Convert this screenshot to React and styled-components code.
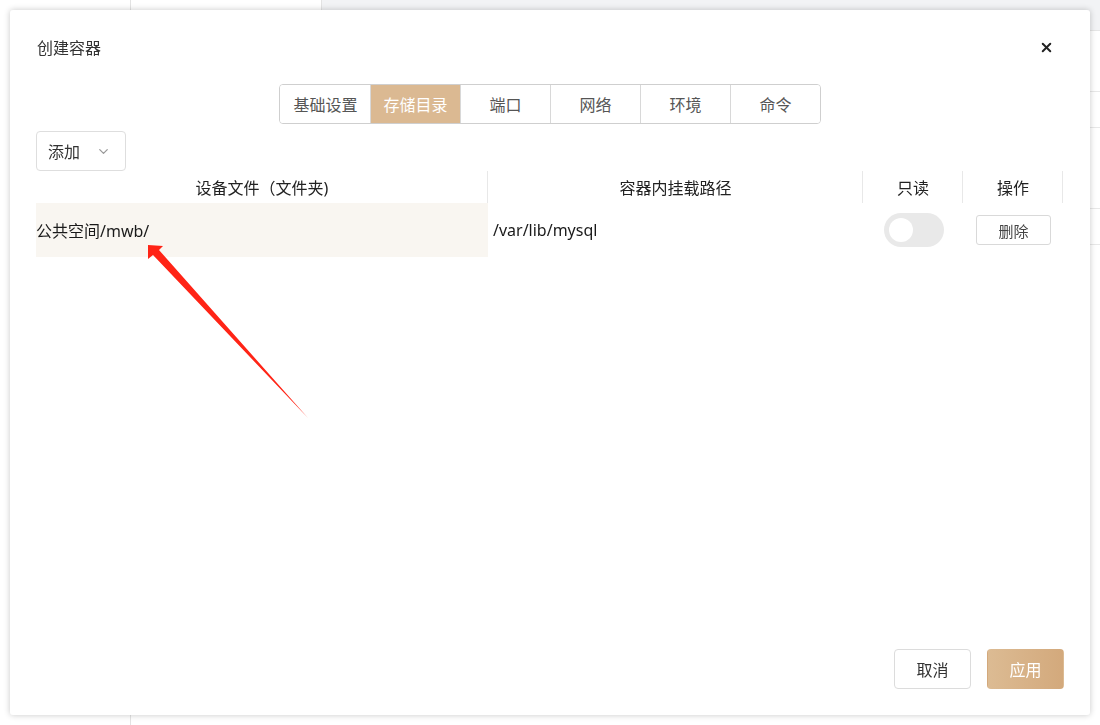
import React from 'react'
import styled, { createGlobalStyle } from 'styled-components'
import { ChevronDown, X } from 'lucide-react'

const Global = createGlobalStyle`
  html, body { margin: 0; padding: 0; }
  body {
    width: 1100px;
    height: 725px;
    overflow: hidden;
    font-family: "Noto Sans", "Noto Sans CJK SC", sans-serif;
    color: #222;
    background: #fff;
  }
`

const tabs = ['基础设置', '存储目录', '端口', '网络', '环境', '命令']

const Page = styled.div`
  display: flex;
  height: 725px;
`
const Side = styled.div`
  width: 130px;
  border-right: 1px solid #e3e3e3;
  background: #fff;
`
const Main = styled.div`
  flex: 1;
  display: flex;
  flex-direction: column;
`
const TopStrip = styled.div`
  height: 30px;
  background: #f2f3f5;
  border-bottom: 1px solid #e6e6e6;
  display: flex;
`
const TopCard = styled.div`
  width: 190px;
  background: #fff;
  border-right: 1px solid #e3e3e3;
`
const BgLine = styled.div`
  height: ${p => p.h}px;
  border-bottom: 1px solid #e8e8e8;
`

const Modal = styled.div`
  position: fixed;
  left: 10px;
  top: 10px;
  width: 1080px;
  height: 705px;
  box-sizing: border-box;
  background: #fff;
  border-radius: 3px;
  box-shadow: 0 0 6px rgba(0, 0, 0, 0.22);
  display: flex;
  flex-direction: column;
  padding: 0 26px 26px 26px;
`
const Header = styled.div`
  height: 74px;
  display: flex;
  align-items: center;
  justify-content: space-between;
`
const Title = styled.div`
  font-size: 16px;
  color: #333;
  padding-left: 1px;
`
const Close = styled.div`
  display: flex;
  margin-right: 10px;
  color: #222;
`
const TabRow = styled.div`
  display: flex;
  justify-content: center;
`
const TabGroup = styled.div`
  display: flex;
  border: 1px solid #cfcfcf;
  border-radius: 4px;
  overflow: hidden;
`
const Tab = styled.div`
  width: 89px;
  height: 38px;
  display: flex;
  align-items: center;
  justify-content: center;
  font-size: 16px;
  color: ${p => (p.active ? '#fff' : '#555')};
  background: ${p => (p.active ? '#dbb992' : '#fff')};
  border-left: 1px solid ${p => (p.first ? 'transparent' : '#d8d8d8')};
`
const Select = styled.div`
  margin-top: 7px;
  width: 90px;
  height: 40px;
  box-sizing: border-box;
  border: 1px solid #dedede;
  border-radius: 4px;
  display: flex;
  align-items: center;
  justify-content: space-between;
  padding: 0 14px 0 11px;
  font-size: 16px;
  color: #333;
`
const Table = styled.div`
  display: grid;
  grid-template-columns: 452px 375px 100px 100px;
`
const Th = styled.div`
  height: 32px;
  display: flex;
  align-items: center;
  justify-content: center;
  font-size: 16px;
  color: #222;
  position: relative;
  &::after {
    content: '';
    position: absolute;
    right: 0;
    top: 0;
    bottom: 0;
    border-right: 1px solid #e8e8e8;
  }
`
const Td = styled.div`
  height: 54px;
  display: flex;
  align-items: center;
  justify-content: ${p => (p.center ? 'center' : 'flex-start')};
  padding-left: ${p => p.pl || 0}px;
  font-size: 16px;
  color: #1a1a1a;
  background: ${p => (p.hl ? '#f9f6f1' : 'transparent')};
`
const Switch = styled.div`
  width: 60px;
  height: 34px;
  border-radius: 17px;
  background: #e9e9e9;
  display: flex;
  align-items: center;
  padding-left: 5px;
  box-sizing: border-box;
  margin-left: 2px;
`
const Knob = styled.div`
  width: 24px;
  height: 24px;
  border-radius: 50%;
  background: #fff;
`
const SmallBtn = styled.div`
  width: 75px;
  height: 30px;
  box-sizing: border-box;
  border: 1px solid #d9d9d9;
  border-radius: 3px;
  display: flex;
  align-items: center;
  justify-content: center;
  font-size: 15px;
  color: #444;
  margin-left: 13px;
`
const Spacer = styled.div`
  flex: 1;
`
const Footer = styled.div`
  display: flex;
  justify-content: flex-end;
  gap: 16px;
`
const Btn = styled.div`
  width: 77px;
  height: 40px;
  box-sizing: border-box;
  border-radius: 4px;
  display: flex;
  align-items: center;
  justify-content: center;
  font-size: 16px;
  color: ${p => (p.primary ? '#fff' : '#333')};
  border: 1px solid ${p => (p.primary ? 'transparent' : '#dcdcdc')};
  background: ${p => (p.primary ? 'linear-gradient(90deg, #dcbb93, #d3a97c)' : '#fff')};
`
const Arrow = styled.svg`
  position: fixed;
  left: 0;
  top: 0;
  width: 1100px;
  height: 725px;
  pointer-events: none;
`

export default function App() {
  return (
    <>
      <Global />
      <Page>
        <Side />
        <Main>
          <TopStrip><TopCard /></TopStrip>
          <BgLine h={60} />
          <BgLine h={35} />
          <BgLine h={80} />
          <BgLine h={35} />
        </Main>
      </Page>
      <Modal>
        <Header>
          <Title>创建容器</Title>
          <Close>
            <X size={15} strokeWidth={3.2} />
          </Close>
        </Header>
        <TabRow>
          <TabGroup>
            {tabs.map((t, i) => (
              <Tab key={t} first={i === 0} active={i === 1}>{t}</Tab>
            ))}
          </TabGroup>
        </TabRow>
        <Select>
          <span>添加</span>
          <ChevronDown size={15} color="#999" />
        </Select>
        <Table>
          <Th>设备文件（文件夹)</Th>
          <Th>容器内挂载路径</Th>
          <Th>只读</Th>
          <Th>操作</Th>
          <Td hl>公共空间/mwb/</Td>
          <Td pl={5}>/var/lib/mysql</Td>
          <Td center>
            <Switch><Knob /></Switch>
          </Td>
          <Td>
            <SmallBtn>删除</SmallBtn>
          </Td>
        </Table>
        <Spacer />
        <Footer>
          <Btn>取消</Btn>
          <Btn primary>应用</Btn>
        </Footer>
      </Modal>
      <Arrow viewBox="0 0 1100 725">
        <polygon points="148,245 163,246 159,250 308,418 153,255 148,259" fill="#ff2416" />
      </Arrow>
    </>
  )
}
